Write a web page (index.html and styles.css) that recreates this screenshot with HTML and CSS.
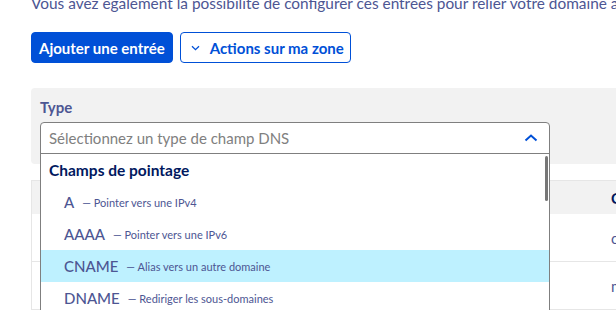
FILE: index.html
```html
<!DOCTYPE html>
<html lang="fr">
<head>
    <meta charset="UTF-8">
    <meta name="viewport" content="width=device-width, initial-scale=1.0">
    <title>Zone DNS</title>
    <link rel="stylesheet" href="styles.css">
</head>
<body>
    <div class="page">
        <p class="intro">Vous avez également la possibilité de configurer ces entrées pour relier votre domaine à un service externe.</p>

        <div class="actions">
            <button class="btn btn-primary">Ajouter une entrée</button>
            <button class="btn btn-outline">
                <svg class="chevron-down" width="9" height="6" viewBox="0 0 9 6"><path d="M1 1.2l3.5 3.5 3.5-3.5" fill="none" stroke="#0050d7" stroke-width="1.3"/></svg>
                Actions sur ma zone
            </button>
        </div>

        <div class="filters">
            <label class="field-label">Type</label>
            <div class="select">
                <div class="select-box">
                    <span class="placeholder">Sélectionnez un type de champ DNS</span>
                    <svg class="chevron-up" width="14" height="8" viewBox="0 0 14 8"><path d="M1.5 6.5L7 1.5l5.5 5" fill="none" stroke="#0050d7" stroke-width="2"/></svg>
                </div>
                <div class="dropdown">
                    <div class="scrollbar"></div>
                    <div class="group">Champs de pointage</div>
                    <div class="option"><span class="type">A</span><span class="desc">— Pointer vers une IPv4</span></div>
                    <div class="option"><span class="type">AAAA</span><span class="desc">— Pointer vers une IPv6</span></div>
                    <div class="option active"><span class="type">CNAME</span><span class="desc">— Alias vers un autre domaine</span></div>
                    <div class="option"><span class="type">DNAME</span><span class="desc">— Rediriger les sous-domaines</span></div>
                </div>
            </div>
        </div>

        <div class="records">
            <div class="row head"><div class="cell"></div><div class="cell">Cible</div></div>
            <div class="row"><div class="cell"></div><div class="cell">cname</div></div>
            <div class="row"><div class="cell"></div><div class="cell">mx</div></div>
        </div>
    </div>
</body>
</html>
```

FILE: styles.css
```css
body {
    margin: 0;
    font-family: Lato, "Open Sans", sans-serif;
    color: #4d5693;
    background: #fff;
    overflow: hidden;
}

.page {
    padding-left: 31px;
}

.intro {
    margin: -7px 0 0 0;
    font-size: 15.4px;
    line-height: 20px;
    white-space: nowrap;
}

.actions {
    display: flex;
    gap: 7px;
    margin-top: 19px;
}

.btn {
    height: 31px;
    padding: 0 7px;
    border-radius: 4px;
    font-family: inherit;
    font-size: 15px;
    font-weight: bold;
    display: inline-flex;
    align-items: center;
    cursor: pointer;
}

.btn-primary {
    background-color: #0050d7;
    border: 1px solid #0050d7;
    color: white;
}

.btn-outline {
    background-color: white;
    border: 1px solid #0050d7;
    color: #0050d7;
    padding: 0 6px 0 10px;
    gap: 10px;
}

.filters {
    margin-top: 25px;
    background-color: #f2f2f2;
    border-radius: 4px 0 0 4px;
    padding: 9px 0 10px 9px;
}

.field-label {
    display: block;
    font-size: 15px;
    line-height: 20px;
    font-weight: bold;
    color: #4d5693;
    margin-bottom: 5px;
}

.select {
    position: relative;
    width: 510px;
}

.select-box {
    height: 30px;
    border: 1px solid #7f7f7f;
    border-radius: 4px 4px 0 0;
    background: white;
    display: flex;
    align-items: center;
    justify-content: space-between;
    padding: 0 11px 0 8px;
}

.placeholder {
    color: #808080;
    font-size: 15px;
}

/* liste ouverte, par-dessus le tableau */
.dropdown {
    position: absolute;
    top: 31px;
    left: 0;
    width: 508px;
    height: 170px;
    background: white;
    border: 1px solid #7f7f7f;
    z-index: 2;
}

.scrollbar {
    position: absolute;
    right: 1px;
    top: 2px;
    width: 3px;
    height: 45px;
    border-radius: 2px;
    background: #777;
}

.group {
    height: 32px;
    display: flex;
    align-items: center;
    padding-left: 8px;
    font-size: 15.5px;
    font-weight: bold;
    color: #00185e;
}

.option {
    height: 32px;
    display: flex;
    align-items: center;
    padding-left: 23px;
    gap: 8px;
}

.option.active {
    background-color: #bef1ff;
}

.type {
    font-size: 15px;
    font-weight: 500;
}

.desc {
    font-size: 11px;
}

.records {
    margin-top: 16px;
    border-top: 1px solid #e6e6e6;
    border-left: 1px solid #e6e6e6;
}

.row {
    display: grid;
    grid-template-columns: 579px 1fr;
    height: 47px;
    align-items: center;
    border-bottom: 1px solid #e6e6e6;
    font-size: 15px;
    white-space: nowrap;
}

.row.head {
    height: 33px;
    background-color: #f2f2f2;
    border-bottom: none;
    font-weight: bold;
    color: #00185e;
}
```
